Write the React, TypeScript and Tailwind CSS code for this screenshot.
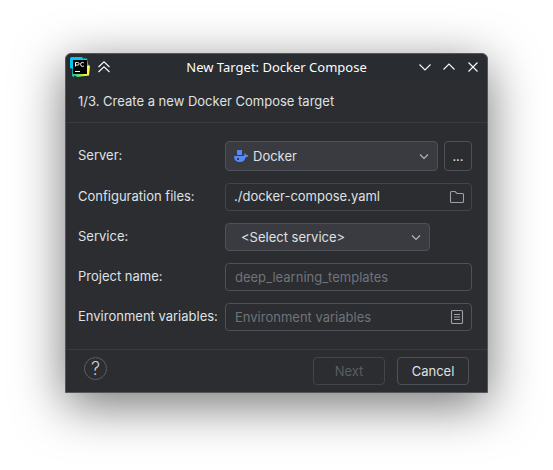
import React from "react";

const field =
  "h-7 w-full rounded border bg-[#2b2d30] text-[13px] leading-4 text-[#dfe1e5] outline-none placeholder:text-[#6f737a]";
const select =
  "w-full appearance-none rounded border border-[#4e5157] bg-[#393b40] pr-8 text-[13px] leading-4 text-[#dfe1e5] outline-none";
const label = "pb-0.5 text-[13px] leading-4 text-[#dfe1e5]";

function ProductLogo() {
  return (
    <svg width="20" height="20" viewBox="0 0 20 20" role="img" aria-label="PyCharm">
      <defs>
        <linearGradient id="edge" x1="0.1" y1="0.8" x2="0.9" y2="0.6">
          <stop offset="0" stopColor="#21d789" />
          <stop offset="0.5" stopColor="#a8ec3a" />
          <stop offset="0.8" stopColor="#fcf84a" />
        </linearGradient>
        <linearGradient id="left" x1="0.3" y1="0" x2="0.4" y2="1">
          <stop offset="0.5" stopColor="#07c3f2" />
          <stop offset="1" stopColor="#21d789" />
        </linearGradient>
      </defs>
      <path d="M5 5L17 7L20 9L19 18.500L7 20L3 17z" fill="url(#edge)" />
      <path d="M11 1.500L17 1.500L18.500 9L11 9z" fill="#16d791" />
      <path d="M0 1L1.500 0H12L14 3L7 12L4 20L2 19L2.500 12L0 11z" fill="url(#left)" />
      <rect x="3" y="3" width="14" height="14" fill="#000" />
      <path d="M5.500 9.500V5.500H7.500Q9.200 5.500 9.200 6.800T7.500 8.100H5.500M14 6.200Q13.400 5.400 12.400 5.400Q10.600 5.400 10.600 7.400T12.400 9.400Q13.400 9.400 14 8.700" fill="none" stroke="#fff" strokeWidth="1" />
      <path d="M5 14.500H10" stroke="#fff" />
    </svg>
  );
}

function Glyph({ d, size = 12, color = "#fcfcfc" }: { d: string; size?: number; color?: string }) {
  return (
    <svg width={size} height={size} viewBox={`0 0 ${size} ${size}`} fill="none" stroke={color} strokeWidth="1.1" aria-hidden="true">
      <path d={d} />
    </svg>
  );
}

function DropArrow() {
  return (
    <span className="pointer-events-none absolute inset-y-0 right-2 flex items-center">
      <Glyph d="M2 4.500L6 8.500L10 4.500" color="#b4b8bf" />
    </span>
  );
}

export default function App() {
  return (
    <main className="bg-white px-[65px] pt-[53px] pb-[77px] font-['Inter',sans-serif]">
      <section
        aria-labelledby="title"
        className="rounded-t-md border border-[#54565a] bg-[#2b2d30] shadow-[0_12px_50px_rgba(0,0,0,0.55)]"
      >
        <header className="grid h-[26px] grid-cols-[1fr_auto_1fr] items-center rounded-t-md bg-[#292c30] px-1">
          <div className="flex items-center gap-2">
            <ProductLogo />
            <button aria-label="Keep above others" className="flex">
              <Glyph d="M0.500 6L6 0.800L11.500 6M0.500 11L6 5.800L11.500 11" />
            </button>
          </div>
          <h1 id="title" className="font-['Noto_Sans',sans-serif] text-[13px] leading-5 text-[#fcfcfc]">
            New Target: Docker Compose
          </h1>
          <div className="flex items-center justify-end gap-3 pr-1">
            <button aria-label="Minimize" className="flex">
              <Glyph d="M0.500 3.500L6 9L11.500 3.500" />
            </button>
            <button aria-label="Maximize" className="flex">
              <Glyph d="M0.500 8.500L6 3L11.500 8.500" />
            </button>
            <button aria-label="Close" className="flex">
              <Glyph d="M1.500 1.500L10.500 10.500M10.500 1.500L1.500 10.500" />
            </button>
          </div>
        </header>

        <h2 className="border-b border-[#393b40] px-3 py-[13px] text-[13px] leading-4 text-[#dfe1e5]">
          1/3. Create a new Docker Compose target
        </h2>

        <form className="grid grid-cols-[147px_1fr] items-center gap-y-3 pt-[18px] pr-[15px] pb-[18px] pl-3">
          <label htmlFor="server" className={label}>Server:</label>
          <div className="flex gap-1.5">
            <div className="relative flex-1">
              <select id="server" className={`${select} h-[30px] pl-[27px]`}>
                <option>Docker</option>
              </select>
              <svg className="pointer-events-none absolute top-2 left-[9px]" width="16" height="14" viewBox="0 0 16 14" fill="#548af7" aria-hidden="true">
                <path d="M3 1h5v5h-5z" />
                <path fillRule="evenodd" d="M0 7H9.500Q10.800 6.500 10.500 4Q12 4.500 12 6H14.500Q14 8 11.500 8.500Q10.500 13 6 13Q0 13 0 7zM3 9v2h2v-2z" />
              </svg>
              <DropArrow />
            </div>
            <button type="button" aria-label="Server settings" className="h-[30px] w-7 rounded border border-[#4e5157] text-[13px] leading-4 text-[#dfe1e5]">
              ...
            </button>
          </div>

          <label htmlFor="files" className={label}>Configuration files:</label>
          <div className="relative">
            <input id="files" defaultValue="./docker-compose.yaml" className={`${field} border-[#43454a] pr-8 pb-0.5 pl-2`} />
            <button type="button" aria-label="Browse" className="absolute inset-y-0 right-[7px] flex items-center">
              <Glyph size={16} color="#9da0a8" d="M1.500 3.500Q1.500 2.500 2.500 2.500H6L8 4.500H13.500Q14.500 4.500 14.500 5.500V12.500Q14.500 13.500 13.500 13.500H2.500Q1.500 13.500 1.500 12.500z" />
            </button>
          </div>

          <label htmlFor="service" className={label}>Service:</label>
          <div className="relative mr-[42px]">
            <select id="service" className={`${select} h-7 pl-[15px]`}>
              <option>&lt;Select service&gt;</option>
            </select>
            <DropArrow />
          </div>

          <label htmlFor="project" className={label}>Project name:</label>
          <input id="project" placeholder="deep_learning_templates" className={`${field} border-[#4e5157] px-[9px]`} />

          <label htmlFor="env" className={label}>Environment variables:</label>
          <div className="relative">
            <input id="env" placeholder="Environment variables" className={`${field} border-[#4e5157] pr-8 pl-[9px]`} />
            <button type="button" aria-label="Edit variables" className="absolute inset-y-0 right-[7px] flex items-center">
              <Glyph size={16} color="#9da0a8" d="M3.500 1.500H12.500Q13.500 1.500 13.500 2.500V13.500Q13.500 14.500 12.500 14.500H3.500Q2.500 14.500 2.500 13.500V2.500Q2.500 1.500 3.500 1.500zM5 5.500H11M5 8H11M5 10.500H11" />
            </button>
          </div>
        </form>

        <footer className="flex items-start gap-3 border-t border-[#393b40] py-[7px] pr-[18px] pl-[18px]">
          <button aria-label="Help" className="mr-auto flex size-[23px] items-center justify-center rounded-full border border-[#5a5d63] text-lg leading-4 font-light text-[#ced0d6]">
            ?
          </button>
          <button disabled className="h-7 w-[72px] rounded border border-[#43454a] text-[13px] leading-4 text-[#5a5d63]">
            Next
          </button>
          <button className="h-7 w-[72px] rounded border border-[#4e5157] text-[13px] leading-4 text-[#dfe1e5]">
            Cancel
          </button>
        </footer>
      </section>
    </main>
  );
}
